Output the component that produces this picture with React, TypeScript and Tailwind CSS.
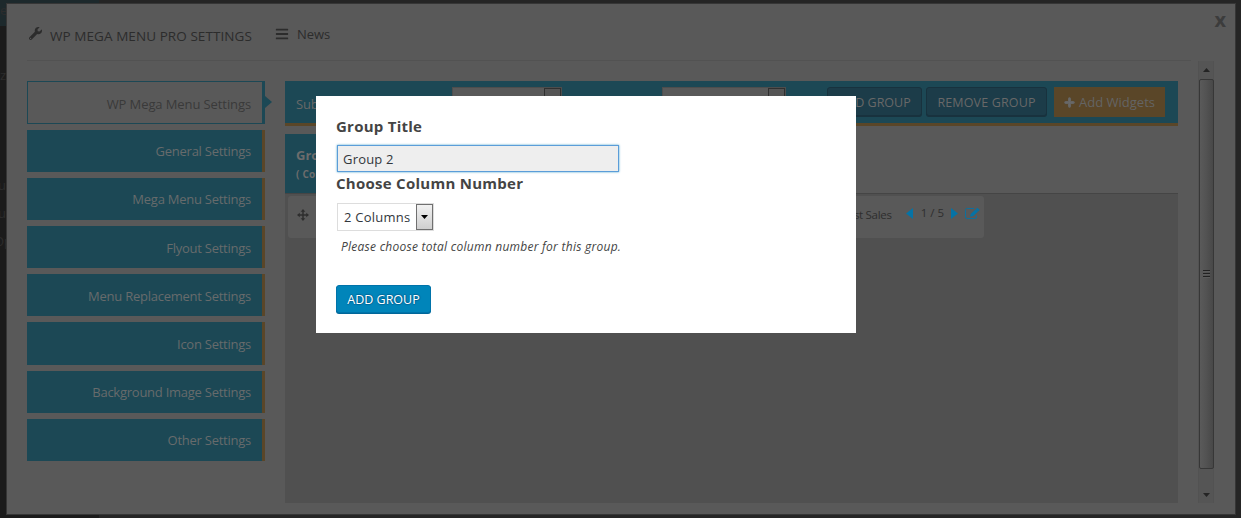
import React from "react";
import { FaWrench, FaBars, FaPlus } from "react-icons/fa";

const sections = [
  { label: "General Settings", box: "mt-[6px] h-[42px] pt-0" },
  { label: "Mega Menu Settings", box: "mt-[6px] h-[42px] pt-0" },
  { label: "Flyout Settings", box: "mt-[6px] h-[42px] pt-px" },
  { label: "Menu Replacement Settings", box: "mt-[6px] h-[42px] pt-px" },
  { label: "Icon Settings", box: "mt-[6px] h-[43px] pt-px" },
  { label: "Background Image Settings", box: "mt-[6px] h-[42px] pt-0" },
  { label: "Other Settings", box: "mt-[6px] h-[42px] pt-0" },
];

function Sidebar() {
  return (
    <nav className="w-[238px] shrink-0 text-right text-[13px] leading-[18px] tracking-[-0.25px] text-[#676b6c]">
      <div className="relative flex h-[43px] items-center justify-end border border-r-[3px] border-[#1c4855] pr-[11px] pt-[2px] text-[#3a3a3a]">
        <span className="tracking-[-0.1px]">WP Mega Menu Settings</span>
        <svg className="absolute left-full top-[14px] ml-[3px]" width="7" height="12" viewBox="0 0 7 12">
          <path d="M0 0L7 6L0 12Z" fill="#1c4855" />
        </svg>
      </div>
      {sections.map((s) => (
        <div key={s.label} className={`${s.box} flex items-center justify-end border-r-[3px] border-[#5a4628] bg-[#1c4855] pr-[11px]`}>
          {s.label}
        </div>
      ))}
    </nav>
  );
}

function DimSelect({ className }: { className: string }) {
  return (
    <div className={`${className} flex h-[28px] justify-end border border-[#4d4d4d] bg-[#595959]`}>
      <div className="h-full w-[17px] border border-[#303030] bg-[#555]" />
    </div>
  );
}

function Toolbar() {
  return (
    <div className="flex h-[45px] border-b-[3px] border-[#5a4628] bg-[#1c4855] text-[13px] text-[#686868]">
      <span className="w-[167px] pl-[11px] pt-[14px] leading-[18px] tracking-[-0.2px]">Sub</span>
      <DimSelect className="mt-[6px] w-[110px]" />
      <DimSelect className="ml-[100px] mt-[6px] w-[124px]" />
      <button className="ml-[41px] mt-[6px] h-[29px] w-[95px] shrink-0 rounded-[3px] border border-[#18323e] bg-[#1c3c49] pt-[3px] text-[12.5px] shadow-[0_1px_0_#18323e]">ADD GROUP</button>
      <button className="ml-1 mt-[6px] h-[29px] w-[121px] shrink-0 rounded-[3px] border border-[#18323e] bg-[#1c3c49] pt-[3px] text-[12.5px] tracking-[0.15px] shadow-[0_1px_0_#18323e]">REMOVE GROUP</button>
      <button className="ml-[7px] mt-[6px] flex h-[30px] w-[111px] shrink-0 items-center justify-center gap-[4px] bg-[#5a4628] pt-px">
        <FaPlus className="text-[11px]" stroke="currentColor" strokeWidth="40" />
        <span className="text-[#646464]">Add Widgets</span>
      </button>
    </div>
  );
}

function EditIcon() {
  return (
    <svg width="15" height="13" viewBox="0 0 15 13" fill="none" stroke="#0573a6">
      <path d="M9 1.500H2.500A1.500 1.500 0 0 0 0.500 3.200V10A1.600 1.600 0 0 0 2.200 11.500H9.500A1.600 1.600 0 0 0 11.500 10V8.500" strokeWidth="0.900" />
      <path d="M5 9.800L5.700 7L12.300 0.800L14.700 3L8 9.200Z" fill="#0573a6" stroke="none" />
      <path d="M10.700 2.200L13 4.600" stroke="#4c5a60" strokeWidth="0.500" />
    </svg>
  );
}

function MoveIcon() {
  return (
    <svg width="12" height="12" viewBox="0 0 13 13" fill="#2e2e2e">
      <path d="M6.500 0L9 3H7.300V5.700H10V4L13 6.500L10 9V7.300H7.300V10H9L6.500 13L4 10H5.700V7.300H3V9L0 6.500L3 4V5.700H5.700V3H4Z" />
    </svg>
  );
}

function Content() {
  return (
    <main className="flex h-[422px] w-[893px] flex-col">
      <Toolbar />
      <div className="mt-2 h-[59px] w-[140px] bg-[#1c4855] pl-[11px] pt-[12px] font-bold text-[#6c6c6c]">
        <div className="text-[13px] leading-[18px]">Group</div>
        <div className="pt-[2px] text-[10px] leading-[16px] tracking-[0.2px]">( Col )</div>
      </div>
      <div className="flex-1 border-t border-[#454545] bg-[#505050] pl-[3px] pt-[2px]">
        <div className="flex h-[42px] w-[696px] rounded-[3px] bg-[#595959] text-[12px] text-[#2e2e2e]">
          <div className="pl-[9px] pt-[13px]"><MoveIcon /></div>
          <div className="ml-auto flex h-[34px] items-center">
            <span className="pt-[4px] text-[11.5px] tracking-[-0.3px]">Best Sales</span>
            <svg className="ml-[14px]" width="7" height="11" viewBox="0 0 7 11"><path d="M7 0V11L0 5.500Z" fill="#0573a6" /></svg>
            <span className="ml-[8px] text-[11.5px]">1 / 5</span>
            <svg className="ml-[7px]" width="7" height="11" viewBox="0 0 7 11"><path d="M0 0L7 5.500L0 11Z" fill="#0573a6" /></svg>
            <span className="ml-[7px] mr-[4px]"><EditIcon /></span>
          </div>
        </div>
      </div>
    </main>
  );
}

function Scrollbar() {
  return (
    <div className="flex h-[442px] w-[16px] flex-col items-center border-x border-[#525252] bg-[#555]">
      <svg className="mt-[7px] shrink-0" width="7" height="4" viewBox="0 0 7 4"><path d="M3.500 0L7 4H0Z" fill="#242424" /></svg>
      <div className="mt-[7px] flex h-[390px] w-[15px] shrink-0 flex-col items-center justify-center gap-px rounded-[2px] border border-[#373737] bg-linear-to-r from-[#5a5a5a] via-[#525252] to-[#484848]">
        <div className="h-[2px] w-[7px] border-t border-[#222] bg-[#5c5c5c]" />
        <div className="h-[2px] w-[7px] border-t border-[#222] bg-[#5c5c5c]" />
        <div className="h-[2px] w-[7px] border-t border-[#222] bg-[#5c5c5c]" />
      </div>
      <svg className="mt-[24px] shrink-0" width="7" height="4" viewBox="0 0 7 4"><path d="M0 0H7L3.500 4Z" fill="#242424" /></svg>
    </div>
  );
}

function GroupDialog() {
  return (
    <section className="absolute left-[316px] top-[96px] flex h-[237px] w-[540px] flex-col items-start bg-white pl-5 text-[#444]">
      <h2 className="mt-[19px] text-[15px] font-bold leading-[22px] tracking-[0.25px]">Group Title</h2>
      <input readOnly value="Group 2" className="ml-px mt-[8px] h-[27px] w-[282px] border border-[#5b9dd9] bg-[#eee] px-[5px] pt-px text-[13px] tracking-[0.2px] text-[#32373c] shadow-[0_0_2px_rgba(30,140,190,0.8)] outline-none" />
      <h2 className="text-[15px] font-bold leading-[22px] tracking-[0.27px]">Choose Column Number</h2>
      <div className="ml-px mt-[9px] flex h-[28px] w-[97px] justify-end border border-[#ddd] bg-white text-[13px] text-[#32373c]">
        <span className="flex-1 whitespace-nowrap pl-[6px] leading-[26px] tracking-[0.25px]">2 Columns</span>
        <span className="flex h-[26px] w-[17px] items-center justify-center border border-[#707070] bg-linear-to-b from-[#f2f2f2] to-[#cfcfcf]">
          <svg width="7" height="4" viewBox="0 0 7 4"><path d="M0 0H7L3.500 4Z" fill="#000" /></svg>
        </span>
      </div>
      <p className="ml-[5px] mt-[6px] text-[12px] italic leading-[20px] tracking-[0.26px]">Please choose total column number for this group.</p>
      <button className="mt-[28px] h-[28px] w-[95px] rounded-[3px] border border-[#0073aa] bg-[#0085ba] pt-[2px] text-[12.5px] text-white shadow-[0_1px_0_#006799] [text-shadow:0_-1px_1px_#006799,1px_0_1px_#006799,0_1px_1px_#006799]">ADD GROUP</button>
    </section>
  );
}

function Backdrop() {
  return (
    <div className="absolute left-0 top-0 h-full w-[99px] overflow-hidden bg-[#1b1b1b] text-[13px] leading-[18px] text-[#2c2c2c]">
      <div className="h-[26px] bg-[#1d292c]" />
      <div className="-mt-[26px] pt-px">e</div>
      <div className="mt-[47px]">z</div>
      <div className="mt-[92px] -ml-[2px]">u</div>
      <div className="mt-[10px] -ml-[2px]">u</div>
      <div className="mt-[10px] -ml-[6px]">Op</div>
    </div>
  );
}

export default function App() {
  return (
    <div className="relative h-[518px] w-[1241px] overflow-hidden bg-[#252525] font-['Open_Sans','Noto_Sans',sans-serif]">
      <Backdrop />
      <div className="relative ml-[6px] mt-[3px] h-[512px] w-[1230px] border border-[#363636] bg-[#595959] text-[#2c2c2c]">
        <header className="ml-[20px] flex h-[57px] w-[1164px] border-b border-[#525252]">
          <FaWrench className="ml-[2px] mt-[23px] text-[13px]" />
          <h1 className="ml-[8px] mt-[22px] whitespace-nowrap text-[13.5px] leading-[20px] tracking-[0.07px]">WP MEGA MENU PRO SETTINGS</h1>
          <FaBars className="ml-[23px] mt-[23px] text-[14px]" />
          <span className="ml-[8px] mt-[20px] text-[13px] leading-[20px]">News</span>
        </header>
        <div className="flex pl-[20px]">
          <div className="flex gap-[20px] pt-[20px]">
            <Sidebar />
            <Content />
          </div>
          <div className="ml-[20px]"><Scrollbar /></div>
        </div>
        <button className="absolute right-[9px] top-[4px] text-[20px] font-bold leading-[24px] text-[#3c3c3c]">x</button>
      </div>
      <GroupDialog />
    </div>
  );
}
